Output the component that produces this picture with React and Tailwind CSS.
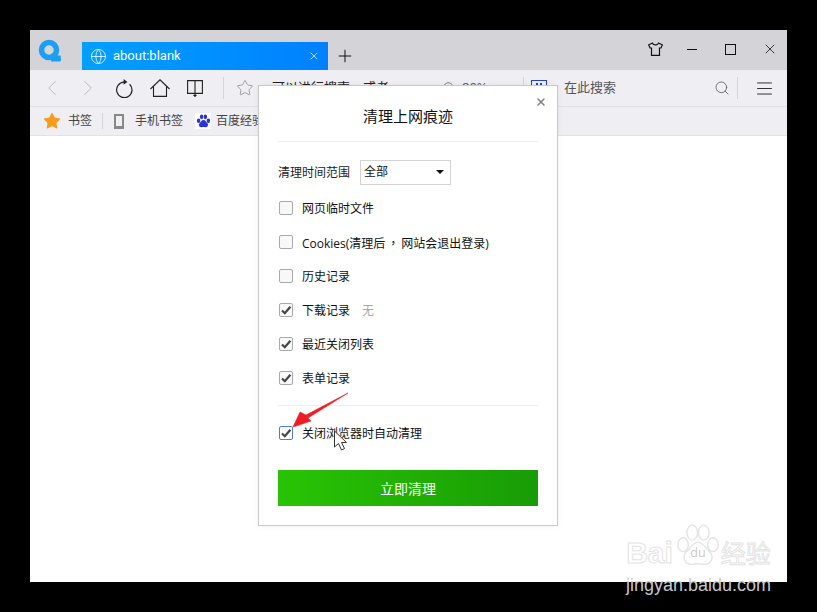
import { ChevronLeft, ChevronRight, Globe, Menu, Plus, Search, Star, X } from "lucide-react";

const rows = [
  { id: "temp", label: "网页临时文件" },
  {
    id: "cookies",
    label: (
      <>
        Cookies(清理后<span className="px-[2px] font-['Noto_Sans_CJK_TC']">，</span>网站会退出登录)
      </>
    ),
  },
  { id: "history", label: "历史记录" },
  { id: "download", label: "下载记录", checked: true, note: "无" },
  { id: "closed", label: "最近关闭列表", checked: true },
  { id: "form", label: "表单记录", checked: true },
];

const Box = ({ checked, focus }) => (
  <span
    className={`flex h-[14px] w-[14px] shrink-0 items-center justify-center rounded-[2px] border ${
      focus ? "border-[#4a7fdc] bg-white" : "border-[#a9a9a9] bg-[#f8f8f8]"
    }`}
  >
    {checked && (
      <svg width="12" height="12" viewBox="0 0 12 12" fill="none" stroke="#444" strokeWidth="2.2">
        <path d="M2 6.5L4.8 9.2L10.4 2.8" />
      </svg>
    )}
  </span>
);

const Row = ({ label, checked, note, focus }) => (
  <div className="flex h-[34px] items-center text-[12px] text-[#111]">
    <span className="ml-px">
      <Box checked={checked} focus={focus} />
    </span>
    <span className="ml-[9px] pt-[2px]">{label}</span>
    {note && <span className="ml-[12px] pt-[2px] text-[#aaa]">{note}</span>}
  </div>
);

const RefreshIcon = () => (
  <svg width="20" height="20" viewBox="0 0 20 20" fill="none" className="ml-[13px]">
    <path d="M15.6 6.3A7.7 7.7 0 1 1 10 4.2" stroke="#222" strokeWidth="1.2" />
    <path d="M9.6 1L13.4 4.1L9.6 6.8z" fill="#222" />
  </svg>
);

const HomeIcon = () => (
  <svg width="20" height="18" viewBox="0 0 20 18" fill="none" stroke="#222" strokeWidth="1.1" className="ml-[16px]">
    <path d="M0.5 10L10 0.8L19.5 10M3.5 7.5V17.4H16.5V7.5" />
  </svg>
);

const BookIcon = () => (
  <svg width="16" height="17" viewBox="0 0 16 17" fill="none" stroke="#222" strokeWidth="1.1" className="ml-[17px]">
    <path d="M0.6 0.6H15.4V13.4H0.6zM8 0.6V16.4M6.5 14.8L8 16.4L9.5 14.8" />
  </svg>
);

const ShirtIcon = () => (
  <svg width="15" height="14" viewBox="0 0 15 14" fill="none" stroke="#111" strokeWidth="1.2">
    <path d="M4.5 1C5 3.4 10 3.4 10.5 1L14.3 2.8L13 6H11.5V13.3H3.5V6H2L0.7 2.8z" />
  </svg>
);

const QLogo = () => (
  <svg width="24" height="24" viewBox="0 0 24 24">
    <circle cx="11" cy="12" r="7.5" fill="none" stroke="#1a9ff2" strokeWidth="5.5" />
    <path d="M14 17L22.5 17.5L23 22a1.5 1.5 0 0 1-1.5 1.5H13z" fill="#1a9ff2" />
  </svg>
);

const Paw = ({ size, fill, stroke, label }) => (
  <svg width={size} height={size} viewBox="0 0 40 40" fill={fill} stroke={stroke} strokeWidth={stroke ? 1.2 : 0}>
    <ellipse cx="7" cy="18" rx="4.6" ry="6" />
    <ellipse cx="15" cy="7.5" rx="4.6" ry="6.5" />
    <ellipse cx="25" cy="7.5" rx="4.6" ry="6.5" />
    <ellipse cx="33" cy="18" rx="4.6" ry="6" />
    <path d="M20 16c5 0 6 5 10 8 4 4 2 12-5 11-3-.5-7-.5-10 0-7 1-9-7-5-11 4-3 5-8 10-8z" />
    {label}
  </svg>
);

const App = () => {
  return (
    <div className="relative h-[612px] w-[817px] overflow-hidden bg-black pl-[30px] pt-[30px] font-['Open_Sans','Noto_Sans_CJK_SC',sans-serif]">
      <div className="flex h-[552px] w-[757px] flex-col bg-white">
        {/* tab strip */}
        <div className="flex h-[40px] items-end bg-[#d4d3d8]">
          <div className="mb-[8px] ml-[8px] mr-[20px] h-[24px]">
            <QLogo />
          </div>
          <div className="flex h-[28px] w-[246px] items-center bg-gradient-to-r from-[#00a0ff] to-[#0080ff] pl-[8px] pr-[8px] text-white">
            <Globe size={17} strokeWidth={1.1} />
            <span className="ml-[6px] font-['Roboto',sans-serif] text-[13px]">about:blank</span>
            <X size={12} strokeWidth={1.4} className="ml-auto" />
          </div>
          <Plus size={20} strokeWidth={1.2} className="mb-[4px] ml-[7px] text-[#111]" />
          <div className="mb-[13px] ml-auto flex items-center text-[#111]">
            <ShirtIcon />
            <span className="ml-[24px] h-px w-[10px] bg-[#111]" />
            <span className="ml-[28px] h-[11px] w-[11px] border-[1.5px] border-[#111]" />
            <X size={16} strokeWidth={1.2} className="ml-[26px] mr-[9px]" />
          </div>
        </div>
        {/* toolbar */}
        <div className="flex h-[37px] items-center border-b border-[#e2e1e6] bg-[#efeef3] text-[13px] text-[#222]">
          <ChevronLeft size={26} strokeWidth={0.9} className="ml-[9px] text-[#b9b9bd]" />
          <ChevronRight size={26} strokeWidth={0.9} className="ml-[10px] text-[#b9b9bd]" />
          <RefreshIcon />
          <HomeIcon />
          <BookIcon />
          <span className="ml-[20px] h-[22px] w-px bg-[#d5d4d9]" />
          <Star size={18} strokeWidth={1} className="ml-[12px] text-[#888]" />
          <span className="ml-[18px] w-[170px] overflow-hidden whitespace-nowrap">可以进行搜索，或者</span>
          <Search size={14} strokeWidth={1.3} className="text-[#555]" />
          <span className="ml-[6px] w-[61px] text-[#555]">80%</span>
          <span className="h-[22px] w-px bg-[#d5d4d9]" />
          <span className="ml-[7px] flex h-[16px] w-[16px] justify-center gap-[2px] border border-[#2244cc] pt-[2px]">
            <span className="h-[3px] w-[2px] bg-[#2244cc]" />
            <span className="h-[3px] w-[2px] bg-[#2244cc]" />
          </span>
          <span className="ml-[17px] text-[#555]">在此搜索</span>
          <Search size={16} strokeWidth={1.2} className="ml-auto text-[#555]" />
          <span className="ml-[7px] h-[22px] w-px bg-[#d5d4d9]" />
          <Menu size={19} strokeWidth={1.1} className="ml-[17px] mr-[13px] scale-x-110" />
        </div>
        {/* bookmarks */}
        <div className="flex h-[29px] items-center border-b border-[#e2e1e6] bg-[#efeef3] text-[12px] text-[#444]">
          <Star size={20} fill="#f79a1e" strokeWidth={0} className="ml-[12px]" />
          <span className="ml-[6px]">书签</span>
          <span className="ml-[10px] h-[16px] w-px bg-[#d5d4d9]" />
          <span className="ml-[11px] h-[15px] w-[10px] border-2 border-b-[3px] border-[#888]" />
          <span className="ml-[11px]">手机书签</span>
          <span className="ml-[12px] flex h-[16px] w-[16px] items-center justify-center bg-white">
            <Paw size={15} fill="#2a32d8" />
          </span>
          <span className="ml-[5px]">百度经验</span>
        </div>
        <div className="flex-1 bg-white" />
      </div>

      {/* dialog */}
      <div className="absolute left-[258px] top-[85px] h-[441px] w-[300px] border border-[#c9c9c9] bg-white px-[19px] shadow-[0_0_6px_rgba(0,0,0,0.06)]">
        <X size={12} strokeWidth={3} className="absolute right-[10px] top-[10px] text-[#808080]" />
        <div className="flex h-[56px] items-center justify-center border-b border-[#eeeeee] pt-[5px] text-[15px] text-[#111]">
          清理上网痕迹
        </div>
        <div className="mt-[17px] flex h-[26px] items-center text-[12px] text-[#222]">
          <span className="pt-[2px]">清理时间范围</span>
          <div className="ml-[10px] flex h-[25px] w-[91px] items-center border border-[#d4d4d4] pl-[3px] pr-[6px] text-[#111]">
            全部
            <span className="ml-auto h-0 w-0 border-x-[4px] border-t-[4px] border-x-transparent border-t-[#111]" />
          </div>
        </div>
        <div className="mt-[6px]">
          {rows.map(({ id, ...row }) => (
            <Row key={id} {...row} />
          ))}
        </div>
        <div className="mt-[10px] border-t border-[#eeeeee]" />
        <div className="mt-[10px]">
          <Row label="关闭浏览器时自动清理" checked focus />
        </div>
        <div className="mt-[20px] flex h-[36px] items-center justify-center bg-gradient-to-r from-[#29c404] to-[#189c05] text-[14px] text-white">
          立即清理
        </div>
      </div>

      {/* annotation + cursor */}
      <svg className="absolute left-[290px] top-[390px]" width="62" height="70" viewBox="0 0 62 70">
        <path d="M58 3L16 25L10 22L3 37L21 31L18 28z" fill="#ee1c25" stroke="#ee1c25" strokeWidth="0.6" />
        <path d="M44.5 41V57l4-3.5l3 6.5l3-1.5l-3-6h5z" fill="#fff" stroke="#333" strokeWidth="1" />
      </svg>

      {/* watermark */}
      <div className="absolute left-[625px] top-[524px] flex w-[147px] flex-col items-center">
        <div className="flex items-end whitespace-nowrap">
          <span className="font-['Liberation_Sans',sans-serif] text-[30px] font-bold leading-[34px] text-white [-webkit-text-stroke:1px_#e4e4e4]">Bai</span>
          <span className="ml-[2px]">
            <Paw
              size={46}
              fill="#fff"
              stroke="#e4e4e4"
              label={<text x="20" y="29" fontSize="11" textAnchor="middle" fill="#ccc" stroke="none">du</text>}
            />
          </span>
          <span className="text-[25px] leading-[34px] text-white [-webkit-text-stroke:1px_#e4e4e4]">经验</span>
        </div>
        <span className="mt-[6px] font-['Liberation_Sans',sans-serif] text-[18px] leading-[18px] text-[#c8c8c8]">jingyan.baidu.com</span>
      </div>
    </div>
  );
};

export default App;
